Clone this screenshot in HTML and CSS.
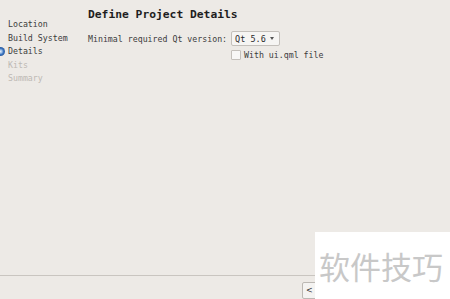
FILE: index.html
```html
<!DOCTYPE html>
<html lang="en">
<head>
  <meta charset="UTF-8">
  <title>New Project - Define Project Details</title>
  <link rel="stylesheet" href="styles.css">
</head>
<body>
  <div class="wizard">
    <div class="content">
      <ul class="steps">
        <li>Location</li>
        <li>Build System</li>
        <li class="current">Details</li>
        <li class="pending">Kits</li>
        <li class="pending">Summary</li>
      </ul>
      <div class="page">
        <h1>Define Project Details</h1>
        <div class="form-row">
          <span class="label">Minimal required Qt version:</span>
          <span class="combo">Qt 5.6 <span class="arrow"></span></span>
        </div>
        <div class="form-row check-row">
          <span class="checkbox"></span>
          <span>With ui.qml file</span>
        </div>
      </div>
    </div>
    <div class="buttons">
      <span class="btn">&lt;</span>
    </div>
  </div>

  <div class="watermark">软件技巧</div>
</body>
</html>
```

FILE: styles.css
```css
html, body {
  margin: 0;
  height: 100%;
}
body {
  background-color: #edeae6;
  font-family: "DejaVu Sans Mono", monospace;
  font-size: 8.25px;
  color: #3c3c3c;
  overflow: hidden;
}
.wizard {
  display: flex;
  flex-direction: column;
  height: 299px;
}
.content {
  display: flex;
  height: 278px;
  border-bottom: 1px solid #c9c5c0;
  box-sizing: border-box;
}
.steps {
  list-style: none;
  margin: 0;
  padding: 18px 0 0 8px;
  width: 80px;
}
.steps li {
  height: 13.6px;
  line-height: 13.6px;
  position: relative;
}
.steps li.current::before {
  content: "";
  position: absolute;
  left: -12px;
  top: 2px;
  width: 9px;
  height: 9px;
  border-radius: 50%;
  background: radial-gradient(circle at 50% 50%, #dce8f5 0, #9fc0e6 1.5px, #3a74c0 3px, #2a5a9e 4.5px);
}
.steps li.pending {
  color: #bdb9b4;
}
.page {
  padding-top: 8px;
}
h1 {
  margin: 0 0 9px 0;
  font-size: 11.3px;
  line-height: 14px;
  font-weight: bold;
  color: #1e1e1e;
}
.form-row {
  display: flex;
  align-items: center;
  gap: 4px;
}
.combo {
  display: inline-flex;
  align-items: center;
  gap: 4px;
  height: 13px;
  padding: 0 5px 0 3px;
  background: #f6f5f3;
  border: 1px solid #c4c0bb;
  border-radius: 2px;
  color: #2a2a2a;
  font-size: 8.5px;
}
.arrow {
  width: 0;
  height: 0;
  border-left: 2.5px solid transparent;
  border-right: 2.5px solid transparent;
  border-top: 3px solid #555;
}
.check-row {
  margin-top: 4px;
  padding-left: 143px;
  gap: 3px;
}
.checkbox {
  width: 8px;
  height: 8px;
  background: #f8f7f6;
  border: 1px solid #c4c0bb;
  border-radius: 1px;
}
.buttons {
  display: flex;
  padding: 6px 0 0 302px;
}
.btn {
  display: inline-block;
  width: 20px;
  height: 15px;
  line-height: 15px;
  padding: 0 3px;
  background: #f4f3f1;
  border: 1px solid #bcb8b3;
  border-radius: 2px;
  font-family: "DejaVu Sans", sans-serif;
  font-size: 8px;
  color: #333;
}
.watermark {
  position: absolute;
  left: 315px;
  top: 232px;
  width: 135px;
  height: 67px;
  background: #fff;
  font-family: "Noto Sans CJK SC", sans-serif;
  font-size: 31px;
  line-height: 67px;
  color: #c8c8c8;
  padding-left: 4px;
  box-sizing: border-box;
}
```
